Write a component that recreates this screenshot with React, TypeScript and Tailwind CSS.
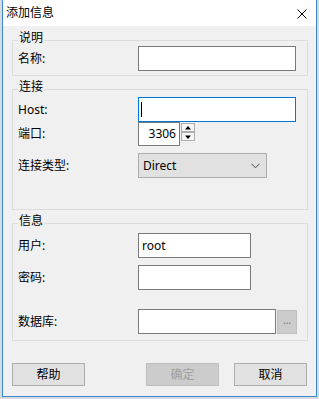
const font = { fontFamily: '"Noto Sans", "Noto Sans CJK SC", sans-serif' };

function Group({ title, className, children }: { title: string; className: string; children: React.ReactNode }) {
  return (
    <div className={`relative border border-[#dcdcdc] ${className}`}>
      <span className="absolute left-[5px] top-[-11px] bg-[#f0f0f0] px-[1px] leading-[16px]">{title}</span>
      {children}
    </div>
  );
}

function Row({ label, className = "", children }: { label: string; className?: string; children: React.ReactNode }) {
  return (
    <div className={`flex items-center pl-[5px] ${className}`}>
      <span className="w-[120px] leading-[16px]">{label}</span>
      {children}
    </div>
  );
}

function Field({ w, value, focused }: { w: string; value?: string; focused?: boolean }) {
  return (
    <div
      className={`${w} h-[25px] bg-white border flex items-center pl-[3px] ${
        focused ? "border-[#0078d7]" : "border-[#7a7a7a]"
      }`}
    >
      {focused && <div className="w-px h-[15px] bg-black -ml-[1px]" />}
      {value && <span className="leading-[16px]">{value}</span>}
    </div>
  );
}

function Button({ label, disabled }: { label: string; disabled?: boolean }) {
  return (
    <div
      className={`w-[73px] h-[23px] border flex items-center justify-center leading-[16px] ${
        disabled ? "bg-[#cccccc] border-[#bfbfbf] text-[#a0a0a0]" : "bg-[#e1e1e1] border-[#adadad] text-black"
      }`}
    >
      {label}
    </div>
  );
}

export default function App() {
  return (
    <div className="w-[319px] h-[399px] bg-[#d6dbe1] pl-[2px] text-[12px] text-black" style={font}>
      <div className="w-[315px] h-[397px] bg-[#f0f0f0] border-x border-b border-[#3b87d0] flex flex-col">
        {/* title bar */}
        <div className="h-[26px] bg-white flex items-center justify-between pl-[3px] pr-[9px]">
          <span className="leading-[16px]">添加信息</span>
          <svg width="10" height="10" viewBox="0 0 10 10" className="mt-[1px]">
            <path d="M0.5 0.5L9.5 9.5M9.5 0.5L0.5 9.5" stroke="#000" strokeWidth="1" />
          </svg>
        </div>

        <div className="flex flex-col pl-[9px] pr-[8px]">
          <Group title="说明" className="mt-[14px] pt-[5px] pb-[4px]">
            <Row label="名称:">
              <Field w="w-[158px]" />
            </Row>
          </Group>

          <Group title="连接" className="mt-[13px] pt-[7px] pb-[31px]">
            <Row label="Host:">
              <Field w="w-[158px]" focused />
            </Row>
            <Row label="端口:">
              <div className="flex items-start">
                <div className="w-[42px] h-[24px] bg-white border border-[#7a7a7a] flex items-center justify-end pr-[3px] leading-[16px]">
                  3306
                </div>
                <div className="ml-[1px] mt-[1px] flex flex-col">
                  <div className="w-[14px] h-[9px] border border-[#adadad] bg-[#f7f7f7] flex items-center justify-center">
                    <svg width="6" height="4" viewBox="0 0 6 4">
                      <path d="M3 0L6 3.5H0Z" fill="#000" />
                    </svg>
                  </div>
                  <div className="w-[14px] h-[9px] border border-[#adadad] bg-[#f7f7f7] flex items-center justify-center">
                    <svg width="6" height="4" viewBox="0 0 6 4">
                      <path d="M0 0.5H6L3 4Z" fill="#000" />
                    </svg>
                  </div>
                </div>
              </div>
            </Row>
            <Row label="连接类型:" className="mt-[7px]">
              <div className="w-[129px] h-[25px] bg-[#e1e1e1] border border-[#adadad] flex items-center justify-between pl-[4px] pr-[6px]">
                <span className="leading-[16px]">Direct</span>
                <svg width="9" height="6" viewBox="0 0 9 6">
                  <path d="M0.5 0.8L4.5 4.8L8.5 0.8" stroke="#444" strokeWidth="1" fill="none" />
                </svg>
              </div>
            </Row>
          </Group>

          <Group title="信息" className="mt-[13px] pt-[9px] pb-[6px]">
            <Row label="用户:">
              <Field w="w-[113px]" value="root" />
            </Row>
            <Row label="密码:" className="mt-[7px]">
              <Field w="w-[113px]" />
            </Row>
            <Row label="数据库:" className="mt-[19px]">
              <div className="flex items-center">
                <Field w="w-[138px]" />
                <div className="ml-[1px] w-[20px] h-[24px] bg-[#cccccc] border border-[#bfbfbf] flex items-center justify-center text-[#6d6d6d] leading-[8px] text-[10px] pb-[3px]">
                  ...
                </div>
              </div>
            </Row>
          </Group>

          <div className="mt-[22px] flex items-center justify-between pr-[1px]">
            <Button label="帮助" />
            <div className="flex gap-[15px]">
              <Button label="确定" disabled />
              <Button label="取消" />
            </div>
          </div>
        </div>
      </div>
    </div>
  );
}
